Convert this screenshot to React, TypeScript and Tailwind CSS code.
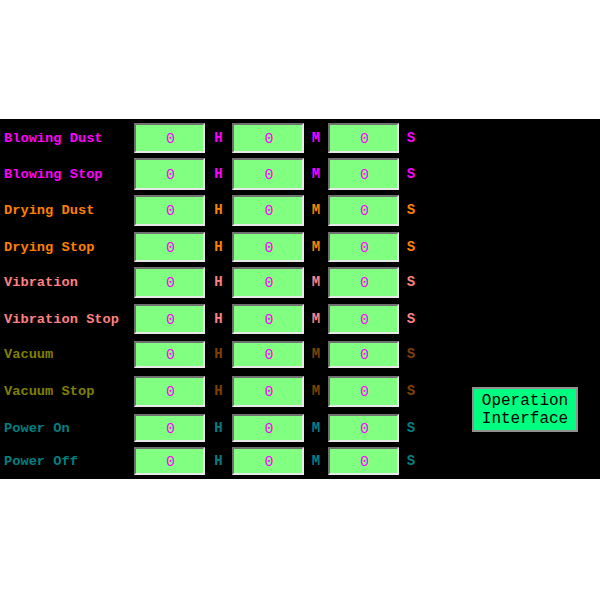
const rows = [
  { label: "Blowing Dust", text: "text-[#ff00ff]", unit: "text-[#ff00ff]", box: "mt-[4px] h-[30px]" },
  { label: "Blowing Stop", text: "text-[#ff00ff]", unit: "text-[#ff00ff]", box: "mt-[5px] h-[32px]" },
  { label: "Drying Dust", text: "text-[#ff8000]", unit: "text-[#ff8000]", box: "mt-[5px] h-[31px]" },
  { label: "Drying Stop", text: "text-[#ff8000]", unit: "text-[#ff8000]", box: "mt-[6px] h-[30px]" },
  { label: "Vibration", text: "text-[#ff8080]", unit: "text-[#ff8080]", box: "mt-[5px] h-[31px]" },
  { label: "Vibration Stop", text: "text-[#ff8080]", unit: "text-[#ff8080]", box: "mt-[6px] h-[30px]" },
  { label: "Vacuum", text: "text-[#808000]", unit: "text-[#804000]", box: "mt-[7px] h-[27px]" },
  { label: "Vacuum Stop", text: "text-[#808000]", unit: "text-[#804000]", box: "mt-[8px] h-[31px]" },
  { label: "Power On", text: "text-[#008080]", unit: "text-[#008080]", box: "mt-[7px] h-[28px]" },
  { label: "Power Off", text: "text-[#008080]", unit: "text-[#008080]", box: "mt-[5px] h-[28px]" },
]

const mono = "font-['Liberation_Mono',monospace]"

const ValueBox = ({ width }: { width: string }) => (
  <div
    className={`${width} h-full flex items-center justify-center bg-[#80ff80] border-2 border-t-[#707070] border-l-[#707070] border-b-[#e8e8e8] border-r-[#e8e8e8] text-[#ff00ff] text-[15px] ${mono}`}
  >
    <span className="translate-x-[1px] translate-y-[2px]">0</span>
  </div>
)

const App = () => {
  return (
    <div className="w-[600px] h-[600px] bg-white flex flex-col">
      <div className="h-[119px]" />
      <div className="h-[360px] bg-black flex">
        <div className="w-[423px] flex flex-col">
          {rows.map((row) => (
            <div key={row.label} className={`flex items-center ${row.box}`}>
              <div className={`w-[134px] pl-[4px] text-[13.7px] font-bold whitespace-nowrap translate-y-[1px] ${mono} ${row.text}`}>
                {row.label}
              </div>
              <ValueBox width="w-[71px]" />
              <div className={`w-[27px] text-center text-[14px] font-bold ${mono} ${row.unit}`}>H</div>
              <ValueBox width="w-[72px]" />
              <div className={`w-[24px] text-center text-[14px] font-bold ${mono} ${row.unit}`}>M</div>
              <ValueBox width="w-[71px]" />
              <div className={`w-[24px] text-center text-[14px] font-bold ${mono} ${row.unit}`}>S</div>
            </div>
          ))}
        </div>
        <div className="flex-1 flex items-end pb-[47px] pl-[49px]">
          <button
            className={`w-[106px] h-[45px] bg-[#00ff80] border-2 border-[#909090] text-black text-[16px] leading-[18px] ${mono} flex flex-col items-center justify-center`}
          >
            <span>Operation</span>
            <span>Interface</span>
          </button>
        </div>
      </div>
    </div>
  )
}

export default App
